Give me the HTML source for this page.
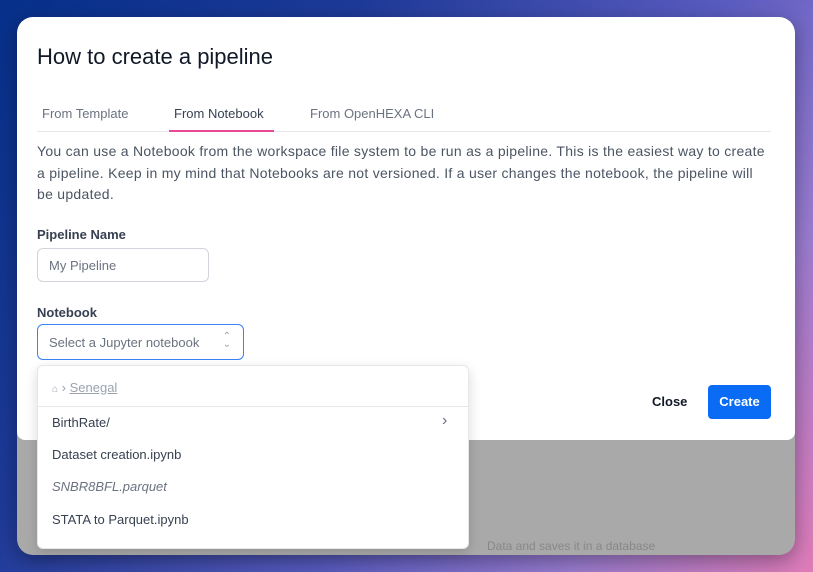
<!DOCTYPE html>
<html><head><meta charset="utf-8"><style>
*{box-sizing:border-box;margin:0;padding:0}
body{width:813px;height:572px;overflow:hidden;font-family:"Liberation Sans",sans-serif;background:linear-gradient(125deg,#06308a 0%,#1e3a98 30%,#5a5cc0 60%,#9a7cd0 80%,#e07cb8 100%);position:relative}
.win{position:absolute;left:17px;top:17px;width:778px;height:538px;border-radius:16px;overflow:hidden;background:#a9a9a9;box-shadow:0 6px 20px rgba(0,0,0,.35)}
.dlg{position:absolute;left:0;top:0;width:778px;height:423px;background:#fff;border-radius:16px 16px 8px 8px}
.abs{position:absolute;white-space:nowrap}
h1{position:absolute;left:20px;top:27px;font-size:22px;font-weight:400;color:#111827}
.tab{position:absolute;top:89px;font-size:13px;color:#6b7280}
.line{position:absolute;left:20px;top:114px;width:734px;height:1px;background:#e5e7eb}
.ul{position:absolute;left:152px;top:113px;width:105px;height:2px;background:#ec4899}
.p{position:absolute;left:20px;top:124px;width:760px;font-size:14px;line-height:21.5px;color:#4b5563;white-space:nowrap;letter-spacing:0.28px}
.lbl{position:absolute;left:20px;font-size:13px;color:#374151;font-weight:600}
.inp{position:absolute;left:20px;top:231px;width:172px;height:34px;border:1px solid #d1d5db;border-radius:6px;font-size:13px;color:#6b7280;padding:9px 11px}
.sel{position:absolute;left:20px;top:307px;width:207px;height:36px;border:1.5px solid #3b82f6;border-radius:6px;font-size:13px;color:#6b7280;padding:10px 11px}
.btn{position:absolute;left:691px;top:368px;width:63px;height:34px;background:#0a6cf5;border-radius:4px;color:#fff;font-size:13px;font-weight:bold;text-align:center;line-height:34px}
.dd{position:absolute;left:37px;top:365px;width:432px;height:184px;background:#fff;border-radius:6px;box-shadow:0 4px 12px rgba(0,0,0,.15);border:1px solid #e5e7eb}
.it{position:absolute;left:14px;font-size:13px;color:#374151}
</style></head><body>
<div class="win">
<div class="abs" style="left:90px;top:510px;width:60px;height:20px;background:#9ab89a;opacity:.5;border-radius:4px"></div>
<div class="abs" style="left:470px;top:522px;font-size:12px;color:#888">Data and saves it in a database</div>
<div class="dlg">
<h1>How to create a pipeline</h1>
<div class="tab" style="left:25px">From Template</div>
<div class="tab" style="left:157px;color:#374151">From Notebook</div>
<div class="tab" style="left:293px">From OpenHEXA CLI</div>
<div class="line"></div><div class="ul"></div>
<div class="p">You can use a Notebook from the workspace file system to be run as a pipeline. This is the easiest way to create<br>a pipeline. Keep in my mind that Notebooks are not versioned. If a user changes the notebook, the pipeline will<br>be updated.</div>
<div class="lbl" style="top:210px">Pipeline Name</div>
<div class="inp">My Pipeline</div>
<div class="lbl" style="top:288px">Notebook</div>
<div class="sel">Select a Jupyter notebook<span style="position:absolute;right:12px;top:8px;font-size:10px;color:#9ca3af;line-height:8px">⌃<br>⌄</span></div>
<div class="abs" style="left:635px;top:377px;font-size:13px;font-weight:bold;color:#111827">Close</div>
<div class="btn">Create</div>
</div>
</div>
<div class="dd">
<div class="abs" style="left:14px;top:14px;font-size:13px;color:#9ca3af"><span style="font-size:10px">⌂</span> › <span style="text-decoration:underline">Senegal</span></div>
<div class="abs" style="left:0;top:40px;width:430px;height:1px;background:#e5e7eb"></div>
<div class="it" style="top:49px">BirthRate/</div>
<div class="abs" style="left:404px;top:46px;font-size:16px;color:#6b7280">›</div>
<div class="it" style="top:81px">Dataset creation.ipynb</div>
<div class="it" style="top:113px;font-style:italic;color:#6b7280">SNBR8BFL.parquet</div>
<div class="it" style="top:146px">STATA to Parquet.ipynb</div>
</div>
</body></html>
